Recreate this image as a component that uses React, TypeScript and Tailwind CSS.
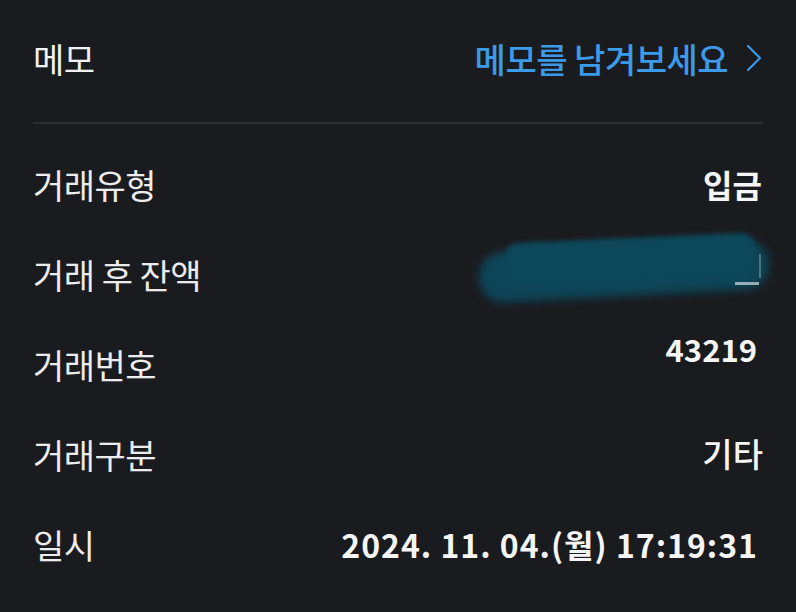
import React from "react";

const font = { fontFamily: '"Noto Sans CJK KR", "Noto Sans", sans-serif' };

function Row({ label, children }: { label: string; children: React.ReactNode }) {
  return (
    <div className="flex h-[90px] items-center justify-between">
      <span className="text-[34px] font-normal text-[#ececec] tracking-[-0.5px]">{label}</span>
      {children}
    </div>
  );
}

export default function App() {
  return (
    <div style={font} className="w-[796px] h-[612px] bg-[#1a1b1f] px-[33px] overflow-hidden">
      <div className="flex h-[122px] items-center justify-between pb-[6px]">
        <span className="text-[34px] text-[#f2f2f2] tracking-[-0.5px]">메모</span>
        <span className="flex items-center gap-[18px] text-[34px] text-[#3b9be8] font-medium tracking-[-0.5px]">
          메모를 남겨보세요
          <svg width="16" height="28" viewBox="0 0 16 28" fill="none" className="mr-[1px]">
            <path d="M2 2 L14 14 L2 26" stroke="#3b9be8" strokeWidth="2.2" strokeLinecap="round" strokeLinejoin="round" />
          </svg>
        </span>
      </div>
      <div className="h-[2px] bg-[#2c2d32]" />
      <div className="mt-[15px]">
        <Row label="거래유형">
          <span className="text-[32px] font-bold text-[#f5f5f5] pr-[1px]">입금</span>
        </Row>
        <Row label="거래 후 잔액">
          <div className="relative w-[300px] h-[76px] -mr-[8px]">
            <div className="absolute left-[8px] top-[10px] w-[290px] h-[50px] bg-[#0c4557] rounded-[24px] blur-[4px] -rotate-[3deg]" />
            <div className="absolute left-[34px] top-[2px] w-[250px] h-[44px] bg-[#0d475a] rounded-[14px] blur-[2px] -rotate-[2.5deg]" />
            <div className="absolute right-[12px] top-[46px] w-[24px] h-[3px] bg-[#b8c8d0] opacity-80" />
            <div className="absolute right-[10px] top-[18px] w-[2px] h-[24px] bg-[#8aa4b0] opacity-50" />
          </div>
        </Row>
        <Row label="거래번호">
          <span className="text-[31px] font-bold text-[#f5f5f5] -mt-[30px] pr-[6px]">43219</span>
        </Row>
        <Row label="거래구분">
          <span className="text-[33px] font-medium text-[#f5f5f5]">기타</span>
        </Row>
        <Row label="일시">
          <span className="text-[32px] font-semibold text-[#f5f5f5] pr-[5px] tracking-[1px]">2024. 11. 04.(월) 17:19:31</span>
        </Row>
      </div>
    </div>
  );
}
